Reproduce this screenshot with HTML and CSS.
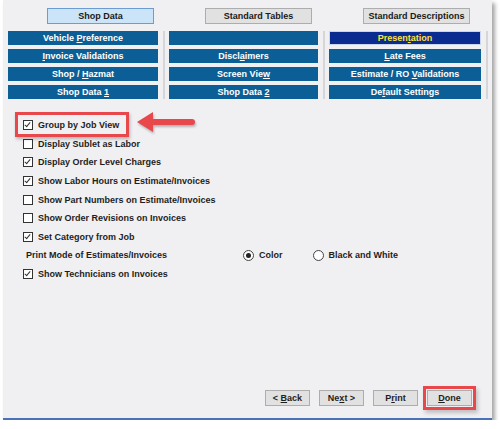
FILE: index.html
```html
<!DOCTYPE html>
<html>
<head>
<meta charset="utf-8">
<link rel="stylesheet" href="styles.css">
</head>
<body>
<div class="window">
  <div class="tabs">
    <div class="tab tab-active"><span>Shop Data</span></div>
    <div class="tab"><span>Standard Tables</span></div>
    <div class="tab"><span>Standard Descriptions</span></div>
  </div>
  <div class="grid">
    <div class="col c1">
      <div class="nav"><span>Vehicle <u>P</u>reference</span></div>
      <div class="nav"><span><u>I</u>nvoice Validations</span></div>
      <div class="nav"><span>Shop / <u>H</u>azmat</span></div>
      <div class="nav"><span>Shop Data <u>1</u></span></div>
    </div>
    <div class="col c2">
      <div class="nav"></div>
      <div class="nav"><span>Discl<u>a</u>imers</span></div>
      <div class="nav"><span>Screen Vie<u>w</u></span></div>
      <div class="nav"><span>Shop Data <u>2</u></span></div>
    </div>
    <div class="col c3">
      <div class="nav nav-active"><span>Presen<u>t</u>ation</span></div>
      <div class="nav"><span><u>L</u>ate Fees</span></div>
      <div class="nav"><span>Estimate / RO <u>V</u>alidations</span></div>
      <div class="nav"><span>De<u>f</u>ault Settings</span></div>
    </div>
  </div>

  <div class="options">
    <div class="opt"><span class="cb on"></span><span>Group by Job View</span></div>
    <div class="opt"><span class="cb"></span><span>Display Sublet as Labor</span></div>
    <div class="opt"><span class="cb on"></span><span>Display Order Level Charges</span></div>
    <div class="opt"><span class="cb on"></span><span>Show Labor Hours on Estimate/Invoices</span></div>
    <div class="opt"><span class="cb"></span><span>Show Part Numbers on Estimate/Invoices</span></div>
    <div class="opt"><span class="cb"></span><span>Show Order Revisions on Invoices</span></div>
    <div class="opt"><span class="cb on"></span><span>Set Category from Job</span></div>
    <div class="opt print">
      <span class="print-label">Print Mode of Estimates/Invoices</span>
      <span class="radio on"></span><span class="rlabel">Color</span>
      <span class="radio"></span><span class="rlabel">Black and White</span>
    </div>
    <div class="opt"><span class="cb on"></span><span>Show Technicians on Invoices</span></div>

    <div class="callout"></div>
    <svg class="arrow" width="62" height="26" viewBox="0 0 62 26">
      <path d="M2 13 L18 3 L18 10 L57 10 Q60 10 60 13 Q60 16 57 16 L18 16 L18 23 Z" fill="#e8474c"/>
    </svg>
  </div>

  <div class="footer">
    <div class="btn"><span>&lt; <u>B</u>ack</span></div>
    <div class="btn"><span>Ne<u>x</u>t &gt;</span></div>
    <div class="btn"><span>P<u>r</u>int</span></div>
    <div class="btn btn-done"><span><u>D</u>one</span></div>
  </div>
  <div class="grip"></div>
</div>
</body>
</html>
```
FILE: styles.css
```css
html, body {
  margin: 0;
  padding: 0;
  background: #ffffff;
}
body {
  font-family: "Liberation Sans", Arial, sans-serif;
  font-weight: bold;
  font-size: 9px;
  color: #1e1e1e;
}
.window {
  position: relative;
  margin-left: 3px;
  width: 489px;
  height: 418px;
  background: #f0eff2;
  border-bottom: 2px solid #4a72b8;
  box-shadow: 3px 3px 4px rgba(0, 0, 0, 0.35);
  display: flex;
  flex-direction: column;
}
.tabs {
  display: flex;
  gap: 51px;
  padding: 8px 0 0 44px;
}
.tab {
  width: 105px;
  height: 14px;
  border: 1px solid #adadad;
  background: #e1e1e1;
  display: flex;
  align-items: center;
  justify-content: center;
  font-size: 9px;
  color: #1a1a1a;
}
.tab-active {
  background: #cce4f7;
  border-color: #6c9cd0;
}
.grid {
  display: flex;
  padding: 7px 0 0 5px;
}
.col {
  display: flex;
  flex-direction: column;
  gap: 4px;
  padding-right: 5px;
  margin-right: 4px;
  border-right: 2px solid #d6d6d8;
}
.c1 .nav { width: 150px; }
.c2 .nav { width: 149px; }
.c3 .nav { width: 152px; }
.nav {
  height: 14px;
  background: #0b5f96;
  color: #ffffff;
  display: flex;
  align-items: center;
  justify-content: center;
  font-size: 9px;
  box-sizing: border-box;
}
.nav-active {
  background: #0a2b90;
  color: #ffe23a;
  border: 1px solid #c9d6ea;
}
.options {
  position: relative;
  padding: 17px 0 0 20px;
}
.opt {
  height: 18.6px;
  display: flex;
  align-items: center;
}
.cb {
  width: 8px;
  height: 8px;
  border: 1px solid #333333;
  background: #ffffff;
  margin-right: 5px;
  position: relative;
  flex: none;
}
.cb.on::after {
  content: "";
  position: absolute;
  left: 2px;
  top: 0px;
  width: 2px;
  height: 5px;
  border-right: 1px solid #333;
  border-bottom: 1px solid #333;
  transform: rotate(40deg);
}
.print-label {
  margin-left: 3px;
  width: 217px;
}
.radio {
  width: 9px;
  height: 9px;
  border: 1px solid #444;
  border-radius: 50%;
  background: #fff;
  position: relative;
  margin-right: 5px;
  flex: none;
}
.radio.on::after {
  content: "";
  position: absolute;
  left: 2px;
  top: 2px;
  width: 5px;
  height: 5px;
  border-radius: 50%;
  background: #222;
}
.rlabel {
  margin-right: 30px;
  white-space: nowrap;
}
.callout {
  position: absolute;
  left: 12px;
  top: 13px;
  width: 108px;
  height: 19px;
  border: 3px solid #e8474c;
  box-shadow: 1px 2px 3px rgba(0,0,0,0.25);
}
.arrow {
  position: absolute;
  left: 132px;
  top: 10px;
  filter: drop-shadow(1px 2px 1px rgba(0,0,0,0.25));
}
.footer {
  margin-top: auto;
  display: flex;
  gap: 9px;
  padding: 0 0 12px 262px;
}
.btn {
  width: 43px;
  height: 14px;
  border: 1px solid #adadad;
  background: #e1e1e1;
  display: flex;
  align-items: center;
  justify-content: center;
  font-size: 9px;
}
.btn-done {
  outline: 3px solid #e8474c;
  outline-offset: 1px;
  box-shadow: 0 0 0 4px #f0eff2, 2px 3px 4px 4px rgba(0,0,0,0.2);
}
.grip {
  position: absolute;
  right: 1px;
  bottom: 1px;
  width: 4px;
  height: 4px;
  background: radial-gradient(circle, #b8b8b8 35%, transparent 40%) 0 0 / 2px 2px;
}
```
